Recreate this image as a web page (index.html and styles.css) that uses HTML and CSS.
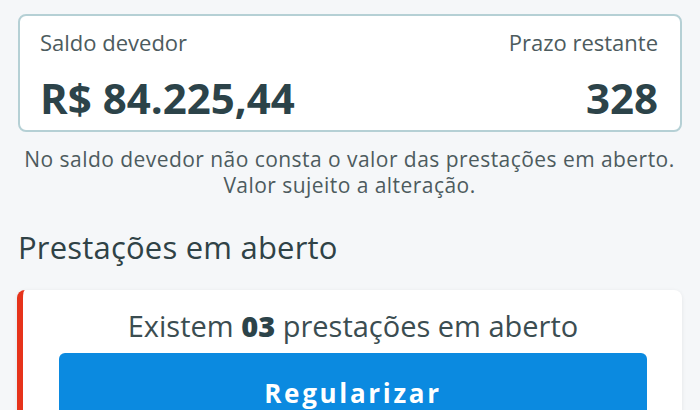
FILE: index.html
```html
<!DOCTYPE html>
<html lang="pt-BR">
<head>
<meta charset="utf-8">
<link rel="stylesheet" href="styles.css">
</head>
<body>
<main class="page">
  <section class="balance">
    <div class="balance-col">
      <span class="label">Saldo devedor</span>
      <span class="value">R$ 84.225,44</span>
    </div>
    <div class="balance-col right">
      <span class="label">Prazo restante</span>
      <span class="value">328</span>
    </div>
  </section>
  <div class="note">
    <p class="note-line">No saldo devedor não consta o valor das prestações em aberto.</p>
    <p class="note-line">Valor sujeito a alteração.</p>
  </div>
  <h2 class="title">Prestações em aberto</h2>
  <section class="open-card">
    <p class="open-text">Existem <b>03</b> prestações em aberto</p>
    <button class="btn">Regularizar</button>
  </section>
</main>
</body>
</html>
```
FILE: styles.css
```css
html, body {
  margin: 0;
  padding: 0;
  background: #f5f7f9;
}
body {
  font-family: "Open Sans", "Lato", sans-serif;
  color: #3f5357;
  width: 700px;
  height: 410px;
  overflow: hidden;
}
.page {
  padding: 14px 18px 0 17px;
}
.balance {
  margin-left: 1px;
  border: 2px solid #b5d0d5;
  border-radius: 8px;
  background: #fff;
  display: flex;
  justify-content: space-between;
  padding: 13px 22px 0 20px;
  height: 118px;
  box-sizing: border-box;
}
.balance-col {
  display: flex;
  flex-direction: column;
}
.balance-col.right {
  align-items: flex-end;
}
.label {
  font-size: 22px;
  line-height: 26px;
  color: #4d5b5e;
}
.value {
  margin-top: 21px;
  font-weight: 700;
  font-size: 42px;
  line-height: 44px;
  color: #2c4349;
}
.note {
  margin: 14px 0 0 0;
  display: flex;
  flex-direction: column;
  align-items: center;
}
.note-line {
  margin: 0;
  text-align: center;
  font-size: 21px;
  letter-spacing: 0.45px;
  line-height: 26px;
  height: 26px;
  color: #4d5b5e;
}
.title {
  margin: 30px 0 0 1px;
  font-weight: 400;
  font-size: 31px;
  line-height: 38px;
  letter-spacing: 0.2px;
  color: #2f4246;
}
.open-card {
  margin-top: 24px;
  background: #fff;
  border-left: 6px solid #e6331b;
  border-radius: 8px;
  box-shadow: 0 1px 4px rgba(0,0,0,0.08);
  padding: 18px 35px 20px 36px;
}
.open-text {
  margin: 0;
  text-align: center;
  font-size: 29px;
  line-height: 36px;
  color: #3b4d51;
}
.open-text b {
  color: #2c4349;
  font-weight: 800;
}
.btn {
  display: block;
  width: 100%;
  margin-top: 9px;
  height: 75px;
  border: none;
  border-radius: 6px;
  background: #0b8ae0;
  color: #fff;
  font-family: "Open Sans", sans-serif;
  font-weight: 700;
  font-size: 26px;
  line-height: 30px;
  letter-spacing: 2.7px;
  padding: 25px 0 20px;
  text-align: center;
  vertical-align: top;
}
```
